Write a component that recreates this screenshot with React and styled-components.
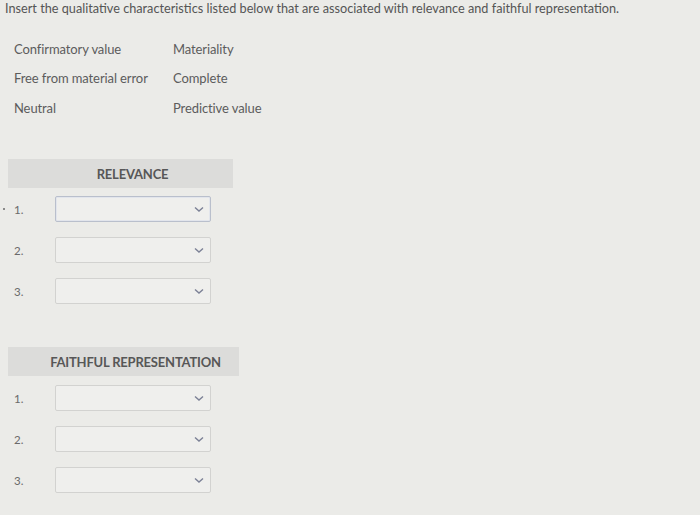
import React from "react";
import styled, { createGlobalStyle } from "styled-components";

const Global = createGlobalStyle`
  html, body { margin: 0; padding: 0; background: #ebebe8; }
  body { font-family: Lato, "Open Sans", sans-serif; color: #5a5a5a; }
`;

const Page = styled.div`
  width: 700px;
  height: 515px;
  padding: 0 0 0 5px;
  box-sizing: border-box;
  overflow: hidden;
  background: #ebebe8;
`;

const Title = styled.div`
  font-size: 12.7px;
  line-height: 16px;
  color: #555;
`;

const Choices = styled.div`
  display: grid;
  grid-template-columns: 159px auto;
  grid-auto-rows: 29.5px;
  align-items: center;
  margin: 18px 0 0 9px;
  font-size: 13px;
  color: #5c5c5c;
  letter-spacing: -0.1px;
`;

const Section = styled.section`
  margin-top: ${(p) => p.$top}px;
`;

const Header = styled.div`
  width: ${(p) => p.$w}px;
  height: 29px;
  margin-left: 3px;
  box-sizing: border-box;
  padding-left: 24px;
  background: #dcdcda;
  display: flex;
  align-items: center;
  justify-content: center;
  font-weight: 700;
  font-size: 13px;
  letter-spacing: -0.2px;
  color: #575757;
`;

const Rows = styled.div`
  display: flex;
  flex-direction: column;
  gap: 15px;
  margin-top: ${(p) => p.$gap}px;
`;

const Row = styled.div`
  display: flex;
  align-items: center;
  height: 26px;
  position: relative;
`;

const Num = styled.span`
  width: 50px;
  padding-left: 9px;
  box-sizing: border-box;
  font-size: 11.5px;
  color: #6a6a6a;
`;

const Marker = styled.span`
  position: absolute;
  left: -2px;
  top: 12px;
  width: 2px;
  height: 2px;
  background: #8a8a8a;
`;

const Select = styled.div`
  width: 156px;
  height: 26px;
  box-sizing: border-box;
  border: 1px solid ${(p) => (p.$focus ? "#b9bfcc" : "#d2d2d0")};
  box-shadow: ${(p) => (p.$focus ? "inset 0 0 0 1px #e2e5ec" : "none")};
  border-radius: 2px;
  background: #efefed;
  display: flex;
  align-items: center;
  justify-content: flex-end;
  padding-right: 6px;
`;

const Chevron = () => (
  <svg width="10" height="7" viewBox="0 0 10 7">
    <path d="M1 1.5 L5 5 L9 1.5" fill="none" stroke="#7c8196" strokeWidth="1.4" />
  </svg>
);

const choices = [
  ["Confirmatory value", "Materiality"],
  ["Free from material error", "Complete"],
  ["Neutral", "Predictive value"],
];

function Group({ top, width, gap, label, focusFirst }) {
  return (
    <Section $top={top}>
      <Header $w={width}>{label}</Header>
      <Rows $gap={gap}>
        {[1, 2, 3].map((n) => (
          <Row key={n}>
            {focusFirst && n === 1 && <Marker />}
            <Num>{n}.</Num>
            <Select $focus={focusFirst && n === 1}>
              <Chevron />
            </Select>
          </Row>
        ))}
      </Rows>
    </Section>
  );
}

export default function App() {
  return (
    <Page>
      <Global />
      <Title>
        Insert the qualitative characteristics listed below that are associated with relevance and faithful representation.
      </Title>
      <Choices>
        {choices.flat().map((c) => (
          <span key={c}>{c}</span>
        ))}
      </Choices>
      <Group top={36.5} width={225} gap={8} label="RELEVANCE" focusFirst />
      <Group top={43} width={231} gap={9} label="FAITHFUL REPRESENTATION" />
    </Page>
  );
}
